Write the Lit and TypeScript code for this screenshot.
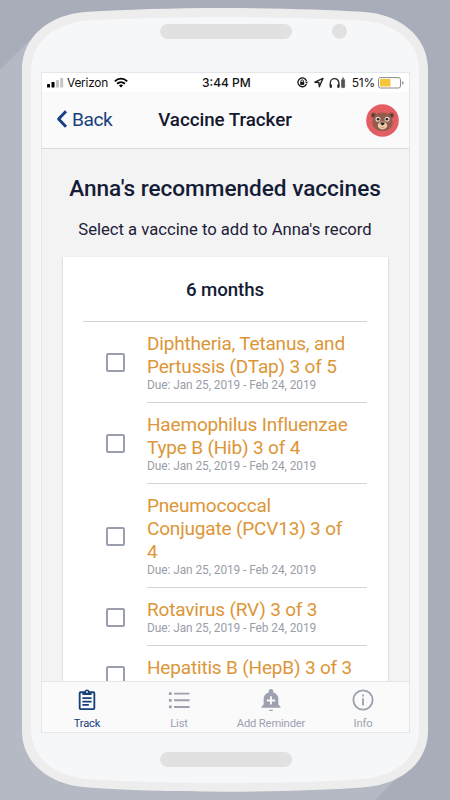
import { LitElement, html, css, svg } from "lit";
import { customElement, property } from "lit/decorators.js";

const DUE = "Due: Jan 25, 2019 - Feb 24, 2019";
const VACCINES: { lines: string[]; due: string }[] = [
  { lines: ["Diphtheria, Tetanus, and", "Pertussis (DTap) 3 of 5"], due: DUE },
  { lines: ["Haemophilus Influenzae", "Type B (Hib) 3 of 4"], due: DUE },
  { lines: ["Pneumococcal", "Conjugate (PCV13) 3 of", "4"], due: DUE },
  { lines: ["Rotavirus (RV) 3 of 3"], due: DUE },
  { lines: ["Hepatitis B (HepB) 3 of 3"], due: "" },
];

@customElement("status-bar")
class StatusBar extends LitElement {
  static styles = css`
    :host { display: grid; grid-template-columns: 155px 1fr auto; align-items: center; height: 19px; padding: 0 5px; background: #fff; color: #111; font: 12px/19px Inter, Roboto, sans-serif; }
    .side { display: flex; align-items: center; }
    .end { justify-content: flex-end; }
    .carrier { margin: 0 6px 0 3px; font-size: 11.9px; letter-spacing: -0.22px; }
    .time { font-weight: 500; letter-spacing: 0; }
    .pct { margin: 0 3px 0 6px; letter-spacing: -0.2px; }
    svg { display: block; flex: none; }
  `;
  render() {
    return html`
      <div class="side">
        <svg width="17" height="11" viewBox="0 0 17 11">
          <rect x="0" y="7" width="3" height="3.5" rx=".6" fill="#000" />
          <rect x="4.5" y="5" width="3" height="5.5" rx=".6" fill="#000" />
          <rect x="9" y="3" width="3" height="7.5" rx=".6" fill="#c6c6c6" />
          <rect x="13.2" y="1" width="3" height="9.5" rx=".6" fill="#c6c6c6" />
        </svg>
        <span class="carrier">Verizon</span>
        <svg width="14" height="11" viewBox="0 0 14 11" fill="none" stroke="#000" stroke-width="1.9">
          <path d="M.8 4.3C4.4.7 9.6.7 13.2 4.3" />
          <path d="M3.1 6.8C5.3 4.7 8.7 4.7 10.9 6.8" />
          <path d="M4.9 8.4Q7 6.7 9.1 8.4L7 10.6Z" fill="#000" stroke="none" />
        </svg>
      </div>
      <div class="time">3:44 PM</div>
      <div class="side end">
        <svg width="11" height="11" viewBox="0 0 11 11" fill="none" stroke="#111">
          <path d="M9.4 6.9A4.4 4.4 0 1 1 9.5 4" stroke-width="1.3" />
          <path d="M8 4.8h3L9.7 6.8z" fill="#111" stroke="none" />
          <rect x="3.2" y="4.9" width="4" height="3" fill="#111" stroke="none" />
          <path d="M4 5V4a1.2 1.2 0 0 1 2.4 0v1" stroke-width=".9" />
        </svg>
        <svg width="21" height="11" viewBox="0 0 21 11" fill="none" stroke="#222">
          <path d="M15 1.3 6.900 5.200l4 .3.4 4.300z" stroke-width="1.4" stroke-linejoin="round" />
        </svg>
        <svg width="17" height="12" viewBox="0 0 17 12" fill="none" stroke="#222">
          <path d="M1.3 9V6a4.2 4.2 0 0 1 8.6 0v3" stroke-width="1.3" />
          <path d="M1.8 7.5v3.3M9.4 7.5v3.3" stroke-width="2.2" />
          <rect x="12.6" y="2.4" width="3" height="8.2" rx=".6" fill="#555" stroke="#555" stroke-width=".8" />
          <path d="M13.3 1.2h1.6" />
        </svg>
        <span class="pct">51%</span>
        <svg width="26" height="12" viewBox="0 0 26 12">
          <rect x=".5" y=".6" width="22" height="10.4" rx="2" fill="#fff" stroke="#8a8a8a" />
          <rect x="2" y="2.1" width="10.5" height="7.4" rx=".6" fill="#f6c638" />
          <path d="M24.2 4v3.8q1.5-.6 1.5-1.9T24.2 4" fill="#8a8a8a" />
        </svg>
      </div>`;
  }
}

@customElement("nav-header")
class NavHeader extends LitElement {
  static styles = css`
    :host { display: grid; grid-template-columns: 1fr auto 1fr; align-items: center; height: 57px; box-sizing: border-box; padding: 0 10px 0 14px; background: #fafafa; border-bottom: 1px solid #d9dadc; }
    .back { display: flex; align-items: center; gap: 4px; color: #183f7f; font-size: 19.2px; letter-spacing: -0.5px; padding-bottom: 2px; }
    .title { font-size: 18.8px; font-weight: 500; letter-spacing: -0.05px; color: #14172e; margin-right: 5px; }
    .avatar { justify-self: end; }
    svg { display: block; }
  `;
  render() {
    return html`
      <div class="back">
        <svg width="12" height="18" viewBox="0 0 12 18" fill="none" stroke="#183f7f" stroke-width="2.9"><path d="M10 1.2 2.6 9l7.4 7.8" stroke-linejoin="round" /></svg>
        <span>Back</span>
      </div>
      <div class="title">Vaccine Tracker</div>
      <svg class="avatar" width="33" height="33" viewBox="0 0 33 33">
        <circle cx="16.5" cy="16.5" r="16.3" fill="#e35e63" />
        <circle cx="7.7" cy="11.3" r="2.8" fill="#885446" /><circle cx="25.3" cy="11.3" r="2.8" fill="#885446" />
        <circle cx="7.4" cy="11.5" r="1.4" fill="#4c3533" /><circle cx="25.6" cy="11.5" r="1.4" fill="#4c3533" />
        <path d="M9 10.5Q16.5 6.3 24 10.5 27.5 16 26.2 21.5 23.5 27 16.5 27T6.8 21.5Q5.5 16 9 10.5" fill="#925d4c" />
        <circle cx="11.9" cy="15.3" r="2.5" fill="#e9d5cb" /><circle cx="21.1" cy="15.3" r="2.5" fill="#e9d5cb" />
        <circle cx="12.1" cy="15.3" r="1.3" fill="#23252c" /><circle cx="20.9" cy="15.3" r="1.3" fill="#23252c" />
        <ellipse cx="16.5" cy="21.5" rx="4.7" ry="3.9" fill="#f0c8a5" />
        <path d="M14.2 18.8q2.3-1.3 4.6 0 0 1.8-2.3 2.6-2.3-.8-2.3-2.6" fill="#25232a" />
        <path d="M14.8 23.2q1.7 1 3.4 0" stroke="#b98470" stroke-width=".7" fill="none" />
      </svg>`;
  }
}

@customElement("vaccine-row")
class VaccineRow extends LitElement {
  @property({ attribute: false }) lines: string[] = [];
  @property({ attribute: false }) due = "";
  static styles = css`
    :host { display: grid; grid-template-columns: 64px 1fr; }
    .check { display: flex; align-items: center; padding-left: 23px; }
    .box { width: 19px; height: 19px; box-sizing: border-box; border: 2px solid #9a9eae; border-radius: 2px; }
    .text { padding: 10px 0; border-bottom: 1px solid #d3d4d8; white-space: nowrap; }
    .name { font-size: 19px; line-height: 23px; letter-spacing: -0.18px; color: #dc9637; }
    .due { height: 14px; font-size: 11.9px; line-height: 14px; letter-spacing: -0.07px; color: #9a9da9; }
  `;
  render() {
    return html`
      <div class="check"><div class="box"></div></div>
      <div class="text">
        ${this.lines.map((l) => html`<div class="name">${l}</div>`)}
        <div class="due">${this.due}</div>
      </div>`;
  }
}

const TABS = [
  { label: "Track", active: true, icon: svg`<path fill-rule="evenodd" d="M19 2.5h-4.2a3 3 0 0 0-5.6 0H5a2 2 0 0 0-2 2V21a2 2 0 0 0 2 2h14a2 2 0 0 0 2-2V4.500a2 2 0 0 0-2-2m-7-.3a1 1 0 1 1 0 2 1 1 0 0 1 0-2M19 21H5V4.600h2v2h10v-2h2zM7 9h10v2H7zm0 3.700h10v2H7zm0 3.700h7v2H7z"/>` },
  { label: "List", active: false, icon: svg`<path d="M1 3.500h3v3H1zm0 7.300h3v3H1zm0 7.300h3v3H1zM6.500 4h17v2h-17zm0 7.300h17v2h-17zm0 7.300h17v2h-17z"/>` },
  { label: "Add Reminder", active: false, icon: svg`<path fill-rule="evenodd" d="M10 22.500h4a2 2 0 0 1-4 0M20 17v-6.500c0-3.500-2.300-6-5.500-6.800V2.500a2.500 2.500 0 0 0-5 0v1.200C6.300 4.500 4 7 4 10.500V17l-2.500 2.500v1h21v-1zM16.500 13.500H13V17h-2v-3.500H7.500v-2H11V8h2v3.500h3.500z"/>` },
  { label: "Info", active: false, icon: svg`<path fill-rule="evenodd" d="M12 .5a11.500 11.500 0 1 0 0 23 11.500 11.500 0 0 0 0-23m0 2a9.500 9.500 0 1 1 0 19 9.500 9.500 0 0 1 0-19M11 6h2v2.200h-2zm0 4.200h2V18h-2z"/>` },
];

@customElement("tab-bar")
class TabBar extends LitElement {
  static styles = css`
    :host { display: grid; grid-template-columns: repeat(4, 92px); height: 51px; box-sizing: border-box; margin-left: -1px; background: #fafafb; border-top: 1px solid #e6e6e8; }
    .tab { display: flex; flex-direction: column; align-items: center; padding-top: 7px; gap: 6px; color: #9da0af; font-size: 11.2px; line-height: 13px; letter-spacing: -0.15px; white-space: nowrap; }
    .active { color: #173f78; }
    svg { display: block; }
  `;
  render() {
    return TABS.map((t) => html`<div class="tab ${t.active ? "active" : ""}">
      <svg width="22" height="22" viewBox="0 0 24 24" fill="currentColor">${t.icon}</svg>
      <span>${t.label}</span>
    </div>`);
  }
}

@customElement("app-root")
class AppRoot extends LitElement {
  static styles = css`
    :host { display: grid; width: 450px; height: 800px; overflow: hidden; font-family: Roboto, sans-serif; }
    .device, .screen { grid-area: 1 / 1; }
    .device { display: block; }
    .screen { display: flex; flex-direction: column; width: 367px; height: 659px; margin: 72px 0 0 41px; border: 1px solid #e5e6e9; overflow: hidden; background: #f3f3f3; z-index: 1; align-self: start; box-sizing: content-box; }
    .content { flex: 1; min-height: 0; overflow: hidden; display: flex; flex-direction: column; }
    .heading { margin-top: 26px; padding-right: 1px; text-align: center; font-size: 22.6px; line-height: 27px; font-weight: 500; letter-spacing: -0.02px; color: #151c36; white-space: nowrap; }
    .sub { margin-top: 18px; padding-right: 1px; text-align: center; font-size: 16.65px; line-height: 20px; color: #1c2038; white-space: nowrap; }
    .card { flex: none; margin: 17px 21px 0; padding: 0 21px 0 20px; background: #fff; box-shadow: 0 1px 2px rgba(0, 0, 0, 0.25); }
    .group { height: 65px; box-sizing: border-box; padding-top: 22px; text-align: center; font-size: 18.7px; line-height: 23px; font-weight: 500; letter-spacing: -0.08px; color: #151c36; border-bottom: 1px solid #d3d4d8; }
  `;
  render() {
    return html`
      <svg class="device" width="450" height="800" viewBox="0 0 450 800">
        <rect width="450" height="800" fill="#a9adb9" />
        <path d="M0 70 70 0 450 725 375 800H0Z" fill="#b5b9c4" />
        <path d="M70 0H450V725L398 778 200 400 30 40Z" fill="#a9adb9" />
        <path d="M225 8C170 8 126 9.700 88 11.700 48 14 22 38 22 69V731C22 762 48 785 88 787.500 126 790 170 791.700 225 791.700S324 790 362 787.500C402 785 428 762 428 731V69C428 38 402 14 362 11.700 324 9.700 280 8 225 8Z" fill="#ededed" />
        <path d="M225 17C170 17 128 18.500 92 20.300 53 22.500 31 42 31 72V728C31 757 53 777 92 779.400 128 781.500 170 783 225 783S322 781.500 358 779.400C397 777 419 757 419 728V72C419 42 397 22.500 358 20.300 322 18.500 280 17 225 17Z" fill="#f6f7f9" />
        <rect x="160" y="24" width="132" height="15" rx="7.500" fill="#e1e1e1" />
        <circle cx="339.500" cy="31.300" r="7.500" fill="#e1e1e1" />
        <rect x="160" y="752" width="132" height="15" rx="7.500" fill="#e1e1e1" />
      </svg>
      <div class="screen">
        <status-bar></status-bar>
        <nav-header></nav-header>
        <div class="content">
          <div class="heading">Anna's recommended vaccines</div>
          <div class="sub">Select a vaccine to add to Anna's record</div>
          <div class="card">
            <div class="group">6 months</div>
            ${VACCINES.map((v) => html`<vaccine-row .lines=${v.lines} .due=${v.due}></vaccine-row>`)}
          </div>
        </div>
        <tab-bar></tab-bar>
      </div>`;
  }
}
